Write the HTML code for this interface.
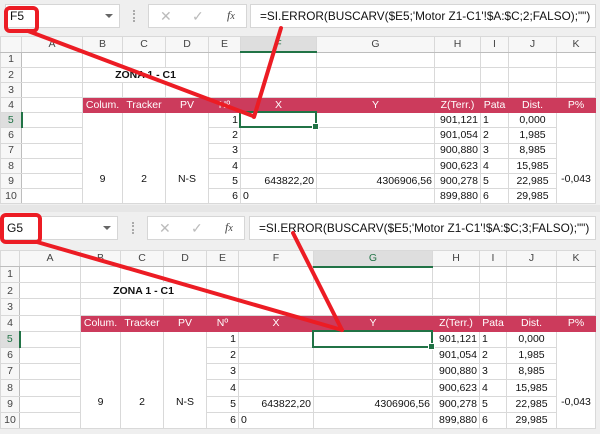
<!DOCTYPE html>
<html><head><meta charset="utf-8"><style>
*{margin:0;padding:0;box-sizing:border-box}
body{width:600px;height:434px;background:#e6e6e6;position:relative;overflow:hidden;font-family:"Liberation Sans",sans-serif;color:#111}
.panel{position:absolute;left:0;width:600px;background:#efefef;overflow:hidden}
.box{position:absolute;background:#fff;border:1px solid #d6d6d6}
.nb{font-size:12px;padding:4px 0 0 4px}
.dd{position:absolute;right:6px;top:9px;width:0;height:0;border-left:4px solid transparent;border-right:4px solid transparent;border-top:4px solid #666}
.ic{position:absolute;top:3px;font-size:14px;color:#bbb}
.fx{position:absolute;top:3px;font-size:12px;font-style:italic;font-family:"Liberation Serif",serif;color:#444}
.fm{font-size:11.8px;padding:4px 0 0 9px;white-space:nowrap;color:#111;overflow:hidden}
.dots{position:absolute;width:2px;height:12px;border-left:2px dotted #aaa}
table{position:absolute;left:0;border-collapse:collapse;table-layout:fixed;background:#fff;font-size:10.5px}
td{border:1px solid #d9d9d9;padding:0 2px;overflow:hidden;white-space:nowrap;line-height:1;vertical-align:middle}
tr.h td{background:#f7f7f7;color:#444;text-align:center;border-bottom:1px solid #bdbdbd;font-size:10.5px}
td.rh{background:#f7f7f7;color:#444;text-align:center;font-size:10.5px;border-right:1px solid #bdbdbd}
td.sel{background:#dedede !important;border-bottom:2px solid #217346 !important;color:#217346 !important}
td.rsel{background:#dedede;border-right:2px solid #217346;color:#217346}
tr.p td.c{background:#cc3b5c;color:#fff;border-color:#cc3b5c;text-align:center;font-size:10.5px}
.r{text-align:right}.ce{text-align:center}
td.m{vertical-align:bottom;text-align:center}
.gb{position:absolute;border:2px solid #217346}
.gb:after{content:"";position:absolute;right:-4px;bottom:-4px;width:5px;height:5px;background:#217346;border:1px solid #fff}
</style></head><body>

<div class="panel" style="top:0;height:205px">
  <div class="box nb" style="left:5px;top:4px;width:115px;height:24px">F5<div class="dd"></div></div>
  <div class="dots" style="left:133px;top:10px"></div>
  <div class="box" style="left:148px;top:4px;width:99px;height:24px">
    <span class="ic" style="left:11px">✕</span><span class="ic" style="left:43px">✓</span><span class="fx" style="left:78px">f<small>x</small></span></div>
  <div class="box fm" style="left:250px;top:4px;width:346px;height:24px">=SI.ERROR(BUSCARV($E5;'Motor Z1-C1'!$A:$C;2;FALSO);"")</div>
  <table style="top:36px;width:595px">
    <colgroup><col style="width:21px"><col style="width:61px"><col style="width:40px"><col style="width:43px"><col style="width:43px"><col style="width:32px"><col style="width:76px"><col style="width:118px"><col style="width:46px"><col style="width:28px"><col style="width:48px"><col style="width:39px"></colgroup>
    <tr class="h" style="height:15.5px"><td></td><td>A</td><td>B</td><td>C</td><td>D</td><td>E</td><td class="sel">F</td><td>G</td><td>H</td><td>I</td><td>J</td><td>K</td></tr>
    <tr style="height:15.2px"><td class="rh">1</td><td></td><td></td><td></td><td></td><td></td><td></td><td></td><td></td><td></td><td></td><td></td></tr>
    <tr style="height:15.2px"><td class="rh">2</td><td></td><td colspan="3" class="ce" style="font-weight:bold">ZONA 1 - C1</td><td></td><td></td><td></td><td></td><td></td><td></td><td></td></tr>
    <tr style="height:15.2px"><td class="rh">3</td><td></td><td></td><td></td><td></td><td></td><td></td><td></td><td></td><td></td><td></td><td></td></tr>
    <tr class="p" style="height:15.2px"><td class="rh">4</td><td></td><td class="c">Colum.</td><td class="c">Tracker</td><td class="c">PV</td><td class="c">Nº</td><td class="c">X</td><td class="c">Y</td><td class="c">Z(Terr.)</td><td class="c">Pata</td><td class="c">Dist.</td><td class="c">P%</td></tr>
    <tr style="height:15.2px"><td class="rh rsel">5</td><td></td><td rowspan="6" class="m" style="padding-bottom:19px">9</td><td rowspan="6" class="m" style="padding-bottom:19px">2</td><td rowspan="6" class="m" style="padding-bottom:19px">N-S</td><td class="r">1</td><td></td><td></td><td class="r">901,121</td><td>1</td><td class="ce">0,000</td><td rowspan="6" class="m" style="padding-bottom:19px">-0,043</td></tr>
    <tr style="height:15.2px"><td class="rh">6</td><td></td><td class="r">2</td><td></td><td></td><td class="r">901,054</td><td>2</td><td class="ce">1,985</td></tr>
    <tr style="height:15.2px"><td class="rh">7</td><td></td><td class="r">3</td><td></td><td></td><td class="r">900,880</td><td>3</td><td class="ce">8,985</td></tr>
    <tr style="height:15.2px"><td class="rh">8</td><td></td><td class="r">4</td><td></td><td></td><td class="r">900,623</td><td>4</td><td class="ce">15,985</td></tr>
    <tr style="height:15.2px"><td class="rh">9</td><td></td><td class="r">5</td><td class="r">643822,20</td><td class="r">4306906,56</td><td class="r">900,278</td><td>5</td><td class="ce">22,985</td></tr>
    <tr style="height:15.2px"><td class="rh">10</td><td></td><td class="r">6</td><td>0</td><td></td><td class="r">899,880</td><td>6</td><td class="ce">29,985</td></tr>
  </table>
  <div class="gb" style="left:239px;top:111px;width:78px;height:17px"></div>
</div>

<div class="panel" style="top:212px;height:222px">
  <div class="box nb" style="left:2px;top:4px;width:116px;height:24px">G5<div class="dd"></div></div>
  <div class="dots" style="left:132px;top:10px"></div>
  <div class="box" style="left:147px;top:4px;width:98px;height:24px">
    <span class="ic" style="left:11px">✕</span><span class="ic" style="left:43px">✓</span><span class="fx" style="left:77px">f<small>x</small></span></div>
  <div class="box fm" style="left:249px;top:4px;width:347px;height:24px">=SI.ERROR(BUSCARV($E5;'Motor Z1-C1'!$A:$C;3;FALSO);"")</div>
  <table style="top:38px;width:595px">
    <colgroup><col style="width:19px"><col style="width:61px"><col style="width:40px"><col style="width:43px"><col style="width:43px"><col style="width:32px"><col style="width:75px"><col style="width:119px"><col style="width:47px"><col style="width:27px"><col style="width:50px"><col style="width:39px"></colgroup>
    <tr class="h" style="height:16px"><td></td><td>A</td><td>B</td><td>C</td><td>D</td><td>E</td><td>F</td><td class="sel">G</td><td>H</td><td>I</td><td>J</td><td>K</td></tr>
    <tr style="height:16.2px"><td class="rh">1</td><td></td><td></td><td></td><td></td><td></td><td></td><td></td><td></td><td></td><td></td><td></td></tr>
    <tr style="height:16.2px"><td class="rh">2</td><td></td><td colspan="3" class="ce" style="font-weight:bold">ZONA 1 - C1</td><td></td><td></td><td></td><td></td><td></td><td></td><td></td></tr>
    <tr style="height:16.2px"><td class="rh">3</td><td></td><td></td><td></td><td></td><td></td><td></td><td></td><td></td><td></td><td></td><td></td></tr>
    <tr class="p" style="height:16.2px"><td class="rh">4</td><td></td><td class="c">Colum.</td><td class="c">Tracker</td><td class="c">PV</td><td class="c">Nº</td><td class="c">X</td><td class="c">Y</td><td class="c">Z(Terr.)</td><td class="c">Pata</td><td class="c">Dist.</td><td class="c">P%</td></tr>
    <tr style="height:16.2px"><td class="rh rsel">5</td><td></td><td rowspan="6" class="m" style="padding-bottom:20px">9</td><td rowspan="6" class="m" style="padding-bottom:20px">2</td><td rowspan="6" class="m" style="padding-bottom:20px">N-S</td><td class="r">1</td><td></td><td></td><td class="r">901,121</td><td>1</td><td class="ce">0,000</td><td rowspan="6" class="m" style="padding-bottom:20px">-0,043</td></tr>
    <tr style="height:16.2px"><td class="rh">6</td><td></td><td class="r">2</td><td></td><td></td><td class="r">901,054</td><td>2</td><td class="ce">1,985</td></tr>
    <tr style="height:16.2px"><td class="rh">7</td><td></td><td class="r">3</td><td></td><td></td><td class="r">900,880</td><td>3</td><td class="ce">8,985</td></tr>
    <tr style="height:16.2px"><td class="rh">8</td><td></td><td class="r">4</td><td></td><td></td><td class="r">900,623</td><td>4</td><td class="ce">15,985</td></tr>
    <tr style="height:16.2px"><td class="rh">9</td><td></td><td class="r">5</td><td class="r">643822,20</td><td class="r">4306906,56</td><td class="r">900,278</td><td>5</td><td class="ce">22,985</td></tr>
    <tr style="height:16.2px"><td class="rh">10</td><td></td><td class="r">6</td><td>0</td><td></td><td class="r">899,880</td><td>6</td><td class="ce">29,985</td></tr>
  </table>
  <div class="gb" style="left:312px;top:118px;width:121px;height:18px"></div>
</div>

<svg style="position:absolute;left:0;top:0" width="600" height="434">
  <g stroke="#ec1c24" stroke-width="4" fill="none" stroke-linecap="round">
    <rect x="6" y="8" width="31" height="23" rx="4"/>
    <line x1="28" y1="31" x2="253" y2="116"/>
    <line x1="281" y1="28" x2="254" y2="117"/>
    <rect x="2" y="215" width="38" height="27" rx="4"/>
    <line x1="37" y1="242" x2="342" y2="330"/>
    <line x1="293" y1="233" x2="342" y2="330"/>
  </g>
</svg>
</body></html>
